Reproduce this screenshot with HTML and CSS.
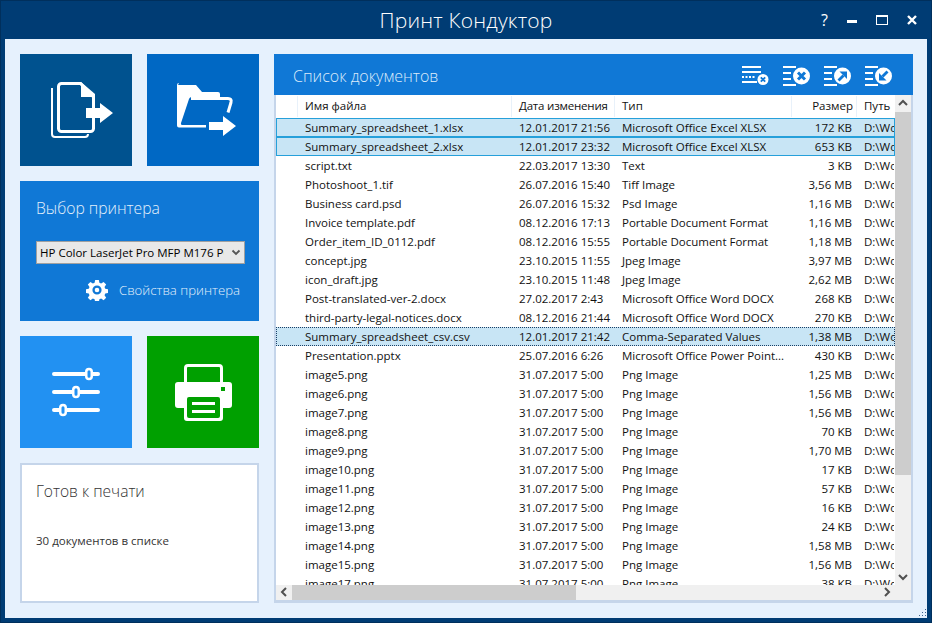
FILE: index.html
```html
<!DOCTYPE html>
<html lang="ru">
<head>
    <meta charset="UTF-8">
    <title>Принт Кондуктор</title>
    <link rel="stylesheet" href="styles.css">
</head>
<body>
    <div class="window">
        <div class="titlebar">
            <div class="title">Принт Кондуктор</div>
            <div class="window-btns">
                <span class="help-btn">?</span>
                <svg width="10" height="10" viewBox="0 0 10 10"><rect x="0" y="5" width="10" height="3" fill="#fff"/></svg>
                <svg width="12" height="10" viewBox="0 0 12 10"><rect x="0.5" y="0.5" width="11" height="9" fill="none" stroke="#fff"/><rect x="0" y="0" width="12" height="2" fill="#fff"/></svg>
                <svg width="10" height="10" viewBox="0 0 10 10"><path d="M1 1l8 8M9 1l-8 8" stroke="#fff" stroke-width="2.400"/></svg>
            </div>
        </div>

        <div class="content">
            <div class="sidebar">
                <div class="tile-row">
                    <div class="tile tile-files">
                        <svg width="112" height="112" viewBox="0 0 112 112">
                            <path d="M32 34v46a3 3 0 0 0 3 3h30a3 3 0 0 0 3-3" fill="none" stroke="#fff" stroke-width="2"/>
                            <path d="M73.500 54v-11l-13-13.500h-19a3 3 0 0 0-3 3v42a3 3 0 0 0 3 3h29a3 3 0 0 0 3-3v-13" fill="#00528f" stroke="#fff" stroke-width="3"/>
                            <path d="M61 28l14 12v3h-14z" fill="#fff"/>
                            <path d="M66 54h14v-5l13 10-13 10v-5h-14z" fill="#fff"/>
                        </svg>
                    </div>
                    <div class="tile tile-folder">
                        <svg width="112" height="112" viewBox="0 0 112 112">
                            <path d="M31 31h18l6 7h16a2 2 0 0 1 2 2v3h-28a3 3 0 0 0-3 2l-8 24a1.500 1.500 0 0 0 1.500 2h23.500v2.500h-27a2 2 0 0 1-2-2v-40.500a2 2 0 0 1 2-2z" fill="#fff"/>
                            <path d="M44 44.500h37q4 0 3 4l-3 10" fill="none" stroke="#fff" stroke-width="3"/>
                            <path d="M62 68h14v-6l13 10-13 10v-6h-14z" fill="#fff"/>
                        </svg>
                    </div>
                </div>

                <div class="printer-panel">
                    <div class="panel-title">Выбор принтера</div>
                    <div class="select-wrap">
                        <select class="printer-select">
                            <option>HP Color LaserJet Pro MFP M176 PCL 6</option>
                        </select>
                        <svg class="select-arrow" width="10" height="7" viewBox="0 0 10 7"><path d="M1.500 1.500l3.500 3.500 3.500-3.500" fill="none" stroke="#555" stroke-width="1.800"/></svg>
                    </div>
                    <div class="printer-props">
                        <svg width="22" height="22" viewBox="0 0 24 24"><path fill="#fff" fill-rule="evenodd" d="M10 1h4l.6 3.200 1.900.8 2.700-1.800 2.800 2.800-1.800 2.700.8 1.900 3.200.6v4l-3.200.6-.8 1.900 1.800 2.700-2.800 2.800-2.700-1.800-1.900.8-.6 3.200h-4l-.6-3.200-1.900-.8-2.700 1.800-2.800-2.800 1.800-2.700-.8-1.900-3.200-.6v-4l3.200-.6.8-1.900-1.800-2.700 2.800-2.800 2.700 1.800 1.900-.8zM12 7a5 5 0 1 0 0 10 5 5 0 0 0 0-10z"/><circle cx="12" cy="12" r="2.500" fill="#fff"/></svg>
                        <span>Свойства принтера</span>
                    </div>
                </div>

                <div class="tile-row">
                    <div class="tile tile-settings">
                        <svg width="112" height="112" viewBox="0 0 112 112">
                            <path d="M34 38h44M34 56h44M34 74h44" stroke="#fff" stroke-width="4" stroke-linecap="round"/>
                            <g fill="#2291f2" stroke="#fff" stroke-width="2.500">
                                <rect x="66.250" y="33" width="5.500" height="10" rx="2.750"/>
                                <rect x="53.250" y="51" width="5.500" height="10" rx="2.750"/>
                                <rect x="40.250" y="69" width="5.500" height="10" rx="2.750"/>
                            </g>
                        </svg>
                    </div>
                    <div class="tile tile-print">
                        <svg width="112" height="112" viewBox="0 0 112 112">
                            <path d="M38.500 47v-15a2.500 2.500 0 0 1 2.500-2.500h31a2.500 2.500 0 0 1 2.500 2.500v15" fill="none" stroke="#fff" stroke-width="3"/>
                            <path d="M31 46h51a3 3 0 0 1 3 3v20a3 3 0 0 1-3 3h-6v10a3 3 0 0 1-3 3h-33a3 3 0 0 1-3-3v-10h-6a3 3 0 0 1-3-3v-20a3 3 0 0 1 3-3z" fill="#fff"/>
                            <rect x="74" y="51" width="4" height="4" fill="#00a000"/>
                            <rect x="40" y="61" width="33" height="21" rx="2" fill="#00a000"/>
                            <rect x="45" y="66" width="23" height="3" fill="#fff"/>
                            <rect x="45" y="74" width="23" height="3" fill="#fff"/>
                        </svg>
                    </div>
                </div>

                <div class="status-panel">
                    <div class="status-title">Готов к печати</div>
                    <div class="status-text">30 документов в списке</div>
                </div>
            </div>

            <div class="docs">
                <div class="docs-header">
                    <div class="docs-title">Список документов</div>
                    <div class="docs-tools">
                        <svg width="27" height="22" viewBox="0 0 27 22">
                            <path d="M0 2h19M0 7h19M0 17h15" stroke="#fff" stroke-width="2"/>
                            <path d="M0 12h14" stroke="#fff" stroke-width="2" stroke-dasharray="2 1.500"/>
                            <circle cx="21" cy="14.500" r="5.500" fill="#fff"/>
                            <path d="M18.800 12.300l4.400 4.400M23.200 12.300l-4.400 4.400" stroke="#1078d6" stroke-width="1.800"/>
                        </svg>
                        <svg width="27" height="22" viewBox="0 0 27 22">
                            <path d="M0 2h13M0 8h8M0 14h8M0 20h13" stroke="#fff" stroke-width="2"/>
                            <circle cx="18.500" cy="11" r="8.500" fill="#fff"/>
                            <path d="M15 7.500l7 7M22 7.500l-7 7" stroke="#1078d6" stroke-width="3"/>
                        </svg>
                        <svg width="27" height="22" viewBox="0 0 27 22">
                            <path d="M0 2h13M0 8h8M0 14h8M0 20h13" stroke="#fff" stroke-width="2"/>
                            <circle cx="18.500" cy="11" r="8.500" fill="#fff"/>
                            <path d="M14.500 15.500l5-5" stroke="#1078d6" stroke-width="2.800"/>
                            <path d="M15.500 6.500h7.500v7.500z" fill="#1078d6"/>
                        </svg>
                        <svg width="27" height="22" viewBox="0 0 27 22">
                            <path d="M0 2h13M0 8h8M0 14h8M0 20h13" stroke="#fff" stroke-width="2"/>
                            <circle cx="18.500" cy="11" r="8.500" fill="#fff"/>
                            <path d="M22.500 6.500l-5 5" stroke="#1078d6" stroke-width="2.800"/>
                            <path d="M14 8v7.500h7.500z" fill="#1078d6"/>
                        </svg>
                    </div>
                </div>

                <div class="list-box">
                    <div class="list-main">
                        <div class="list-area">
                            <div class="row head-row">
                                <div class="c-check"></div>
                                <div class="c-name">Имя файла</div>
                                <div class="c-date">Дата изменения</div>
                                <div class="c-type">Тип</div>
                                <div class="c-size">Размер</div>
                                <div class="c-path">Путь</div>
                            </div>
                            <div class="rows" id="rows"></div>
                        </div>
                        <div class="vscroll">
                            <svg class="arrow" width="16" height="17" viewBox="0 0 16 17"><path d="M4 10l4-4 4 4" fill="none" stroke="#505050" stroke-width="2"/></svg>
                            <div class="vthumb"></div>
                            <div class="vtrack"></div>
                            <svg class="arrow" width="16" height="17" viewBox="0 0 16 17"><path d="M4 7l4 4 4-4" fill="none" stroke="#505050" stroke-width="2"/></svg>
                        </div>
                    </div>
                    <div class="hscroll">
                        <svg class="arrow" width="16" height="15" viewBox="0 0 16 15"><path d="M10 3l-4 4 4 4" fill="none" stroke="#505050" stroke-width="2"/></svg>
                        <div class="hthumb"></div>
                        <div class="htrack"></div>
                        <svg class="arrow" width="16" height="15" viewBox="0 0 16 15"><path d="M6 3l4 4-4 4" fill="none" stroke="#505050" stroke-width="2"/></svg>
                        <div class="hcorner"></div>
                    </div>
                </div>
            </div>
        </div>

        <svg class="grip" width="10" height="10" viewBox="0 0 10 10"><path d="M8 1h1v1h-1zM5 4h1v1h-1zM8 4h1v1h-1zM2 7h1v1h-1zM5 7h1v1h-1zM8 7h1v1h-1z" fill="#3d628c"/></svg>
    </div>

    <script src="app.js"></script>
</body>
</html>
```

FILE: styles.css
```css
* {
    margin: 0;
    padding: 0;
    box-sizing: border-box;
}

html, body {
    width: 932px;
    height: 623px;
    overflow: hidden;
}

body {
    font-family: "Open Sans", "Noto Sans", sans-serif;
    font-size: 11.5px;
    color: #111;
}

.window {
    position: relative;
    width: 932px;
    height: 623px;
    background-color: #003c74;
    border: 1px solid #002f5c;
    padding: 0 4px 4px 4px;
    display: flex;
    flex-direction: column;
}

.titlebar {
    height: 38px;
    flex-shrink: 0;
    position: relative;
    display: flex;
    align-items: center;
    justify-content: center;
}

.title {
    color: #fff;
    font-size: 21px;
    font-weight: 300;
    letter-spacing: 0.2px;
}

.window-btns {
    position: absolute;
    right: 10px;
    top: 14px;
    display: flex;
    align-items: center;
    gap: 19px;
}

.help-btn {
    color: #fff;
    font-size: 16px;
    line-height: 10px;
}

.content {
    flex: 1;
    background-color: #e6f1fd;
    padding: 15px;
    display: flex;
    gap: 15px;
}

.sidebar {
    width: 239px;
    flex-shrink: 0;
    display: flex;
    flex-direction: column;
    gap: 15px;
}

.tile-row {
    display: flex;
    gap: 15px;
}

.tile {
    width: 112px;
    height: 112px;
    display: flex;
    align-items: center;
    justify-content: center;
}

.tile-files { background-color: #00528f; }
.tile-folder { background-color: #0068c4; }
.tile-settings { background-color: #2291f2; }
.tile-print { background-color: #00a000; }

.printer-panel {
    height: 140px;
    background-color: #1078d6;
    padding: 16px 14px 0 16px;
    color: #fff;
}

.panel-title {
    font-size: 15.7px;
    font-weight: 300;
    line-height: 22px;
    color: #e4f0fb;
}

.select-wrap {
    position: relative;
    width: 209px;
    margin-top: 22px;
}

.printer-select {
    display: block;
    width: 100%;
    height: 23px;
    padding: 0 20px 0 3px;
    appearance: none;
    font-family: "Open Sans", sans-serif;
    font-size: 11.5px;
    background-color: #e8e8e8;
    border: 1px solid #a0a0a0;
    border-radius: 0;
    color: #000;
}

.select-arrow {
    position: absolute;
    right: 4px;
    top: 8px;
}

.printer-props {
    display: flex;
    align-items: center;
    justify-content: flex-end;
    gap: 11px;
    margin-top: 15px;
    padding-right: 5px;
    font-size: 13.2px;
    font-weight: 300;
    color: #e4f0fb;
}

.status-panel {
    height: 140px;
    background-color: #fff;
    border: 2px solid #c5d5ea;
    padding: 15px 14px;
}

.status-title {
    font-size: 15.6px;
    font-weight: 300;
    line-height: 22px;
    color: #333;
}

.status-text {
    margin-top: 31px;
    font-size: 11.5px;
    color: #333;
}

.docs {
    flex: 1;
    display: flex;
    flex-direction: column;
}

.docs-header {
    height: 41px;
    flex-shrink: 0;
    background-color: #1078d6;
    display: flex;
    align-items: center;
    justify-content: space-between;
    padding: 2px 21px 0 19px;
}

.docs-title {
    color: #dcebfa;
    font-size: 16px;
    font-weight: 300;
}

.docs-tools {
    display: flex;
    gap: 14px;
}

.list-box {
    flex: 1;
    min-height: 0;
    background-color: #fff;
    border: solid #c5d5ea;
    border-width: 0 2px 3px 2px;
    display: flex;
    flex-direction: column;
}

.list-main {
    flex: 1;
    min-height: 0;
    display: flex;
}

.list-area {
    flex: 1;
    min-width: 0;
    overflow: hidden;
}

.row {
    display: flex;
    height: 19px;
    line-height: 17px;
    white-space: nowrap;
    border: 1px solid transparent;
}

.row div {
    overflow: hidden;
    flex-shrink: 0;
}

.head-row {
    height: 23px;
    line-height: 20px;
}

.head-row div {
    border-right: 1px solid #e8f1fa;
}

.head-row .c-date {
    letter-spacing: -0.2px;
}

.head-row .c-size {
    padding-right: 3px;
}

.head-row .c-path {
    border-right: none;
}

.rows {
    height: 467px;
    overflow: hidden;
}

.c-check { width: 21px; }
.c-name { width: 214px; padding-left: 7px; }
.c-date { width: 103px; padding-left: 7px; }
.c-type { width: 177px; padding-left: 7px; }
.c-size { width: 65px; padding-right: 5px; text-align: right; }
.c-path { width: 37px; padding-left: 7px; }

.row.selected {
    background-color: #c8e5f5;
    border-color: #26a0da;
}

.row.current {
    background-color: #c8e5f5;
    border: 1px dotted #1a3f66;
}

.vscroll {
    width: 16px;
    flex-shrink: 0;
    background-color: #f0f0f0;
    display: flex;
    flex-direction: column;
}

.vthumb {
    height: 363px;
    background-color: #cdcdcd;
}

.vtrack {
    flex: 1;
}

.arrow {
    display: block;
    flex-shrink: 0;
}

.hscroll {
    height: 15px;
    flex-shrink: 0;
    background-color: #f0f0f0;
    display: flex;
}

.hthumb {
    width: 284px;
    background-color: #cdcdcd;
}

.htrack {
    flex: 1;
}

.hcorner {
    width: 16px;
    flex-shrink: 0;
}

.grip {
    position: absolute;
    right: 4px;
    bottom: 4px;
}
```

FILE: app.js
```js
const files = [
    ['Summary_spreadsheet_1.xlsx', '12.01.2017 21:56', 'Microsoft Office Excel XLSX', '172 KB', 'selected'],
    ['Summary_spreadsheet_2.xlsx', '12.01.2017 23:32', 'Microsoft Office Excel XLSX', '653 KB', 'selected'],
    ['script.txt', '22.03.2017 13:30', 'Text', '3 KB'],
    ['Photoshoot_1.tif', '26.07.2016 15:40', 'Tiff Image', '3,56 MB'],
    ['Business card.psd', '26.07.2016 15:32', 'Psd Image', '1,16 MB'],
    ['Invoice template.pdf', '08.12.2016 17:13', 'Portable Document Format', '1,16 MB'],
    ['Order_item_ID_0112.pdf', '08.12.2016 15:55', 'Portable Document Format', '1,18 MB'],
    ['concept.jpg', '23.10.2015 11:55', 'Jpeg Image', '3,97 MB'],
    ['icon_draft.jpg', '23.10.2015 11:48', 'Jpeg Image', '2,62 MB'],
    ['Post-translated-ver-2.docx', '27.02.2017 2:43', 'Microsoft Office Word DOCX', '268 KB'],
    ['third-party-legal-notices.docx', '08.12.2016 21:44', 'Microsoft Office Word DOCX', '270 KB'],
    ['Summary_spreadsheet_csv.csv', '12.01.2017 21:42', 'Comma-Separated Values', '1,38 MB', 'current'],
    ['Presentation.pptx', '25.07.2016 6:26', 'Microsoft Office Power Point...', '430 KB'],
    ['image5.png', '31.07.2017 5:00', 'Png Image', '1,25 MB'],
    ['image6.png', '31.07.2017 5:00', 'Png Image', '1,56 MB'],
    ['image7.png', '31.07.2017 5:00', 'Png Image', '1,56 MB'],
    ['image8.png', '31.07.2017 5:00', 'Png Image', '70 KB'],
    ['image9.png', '31.07.2017 5:00', 'Png Image', '1,70 MB'],
    ['image10.png', '31.07.2017 5:00', 'Png Image', '17 KB'],
    ['image11.png', '31.07.2017 5:00', 'Png Image', '57 KB'],
    ['image12.png', '31.07.2017 5:00', 'Png Image', '16 KB'],
    ['image13.png', '31.07.2017 5:00', 'Png Image', '24 KB'],
    ['image14.png', '31.07.2017 5:00', 'Png Image', '1,58 MB'],
    ['image15.png', '31.07.2017 5:00', 'Png Image', '1,56 MB'],
    ['image17.png', '31.07.2017 5:00', 'Png Image', '38 KB']
];

const rows = document.getElementById('rows');

files.forEach(function(file) {
    const row = document.createElement('div');
    row.className = 'row ' + (file[4] || '');
    row.innerHTML = '<div class="c-check"></div>' +
        '<div class="c-name">' + file[0] + '</div>' +
        '<div class="c-date">' + file[1] + '</div>' +
        '<div class="c-type">' + file[2] + '</div>' +
        '<div class="c-size">' + file[3] + '</div>' +
        '<div class="c-path">D:\\Work\\Docs</div>';
    rows.appendChild(row);
});
```
